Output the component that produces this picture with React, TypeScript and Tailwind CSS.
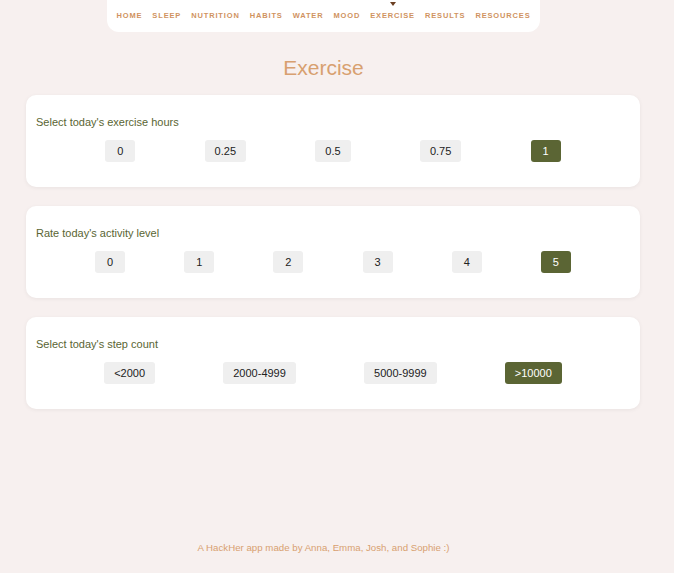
import React from "react";

const navItems = ["HOME", "SLEEP", "NUTRITION", "HABITS", "WATER", "MOOD", "EXERCISE", "RESULTS", "RESOURCES"];

function Card({ label, options, selected }: { label: string; options: string[]; selected: string }) {
  return (
    <div className="bg-white rounded-[10px] shadow-[0_1px_4px_rgba(0,0,0,0.06)] pt-[20px] pb-[25px] px-[10px]">
      <div className="text-[11px] leading-[14px] text-[#5a6533]">{label}</div>
      <div className="mt-[11px] flex justify-evenly">
        {options.map((o) => (
          <div
            key={o}
            className={
              o === selected
                ? "h-[22px] min-w-[30px] px-[10px] rounded-[3px] bg-[#5b6534] text-white text-[11px] flex items-center justify-center"
                : "h-[22px] min-w-[30px] px-[10px] rounded-[3px] bg-[#efefef] text-[#222] text-[11px] flex items-center justify-center"
            }
          >
            {o}
          </div>
        ))}
      </div>
    </div>
  );
}

export default function App() {
  return (
    <div className="min-h-[573px] bg-[#f7f0ef]" style={{ fontFamily: '"Liberation Sans", Arial, sans-serif' }}>
      <div className="w-[647px] flex flex-col items-center">
        <nav className="bg-white rounded-b-[12px] w-[433px] h-[32px] flex items-center justify-center gap-[10px]">
          {navItems.map((n) => (
            <div key={n} className="relative text-[7.5px] font-bold tracking-[0.85px] text-[#d0935f] leading-none">
              {n === "EXERCISE" && (
                <div className="absolute left-1/2 -translate-x-1/2 top-[-10px] w-0 h-0 border-l-[3px] border-r-[3px] border-t-[4px] border-l-transparent border-r-transparent border-t-[#6b3f22]" />
              )}
              {n}
            </div>
          ))}
        </nav>
        <h1 className="mt-[24px] text-[21px] leading-[24px] text-[#d8a070]">Exercise</h1>
        <div className="self-start ml-[26px] mt-[15px] w-[614px] flex flex-col gap-[19px]">
          <Card label="Select today's exercise hours" options={["0", "0.25", "0.5", "0.75", "1"]} selected="1" />
          <Card label="Rate today's activity level" options={["0", "1", "2", "3", "4", "5"]} selected="5" />
          <Card label="Select today's step count" options={["<2000", "2000-4999", "5000-9999", ">10000"]} selected=">10000" />
        </div>
        <div className="mt-[132px] text-[9.7px] leading-[14px] text-[#d8a070]">A HackHer app made by Anna, Emma, Josh, and Sophie :)</div>
      </div>
    </div>
  );
}
